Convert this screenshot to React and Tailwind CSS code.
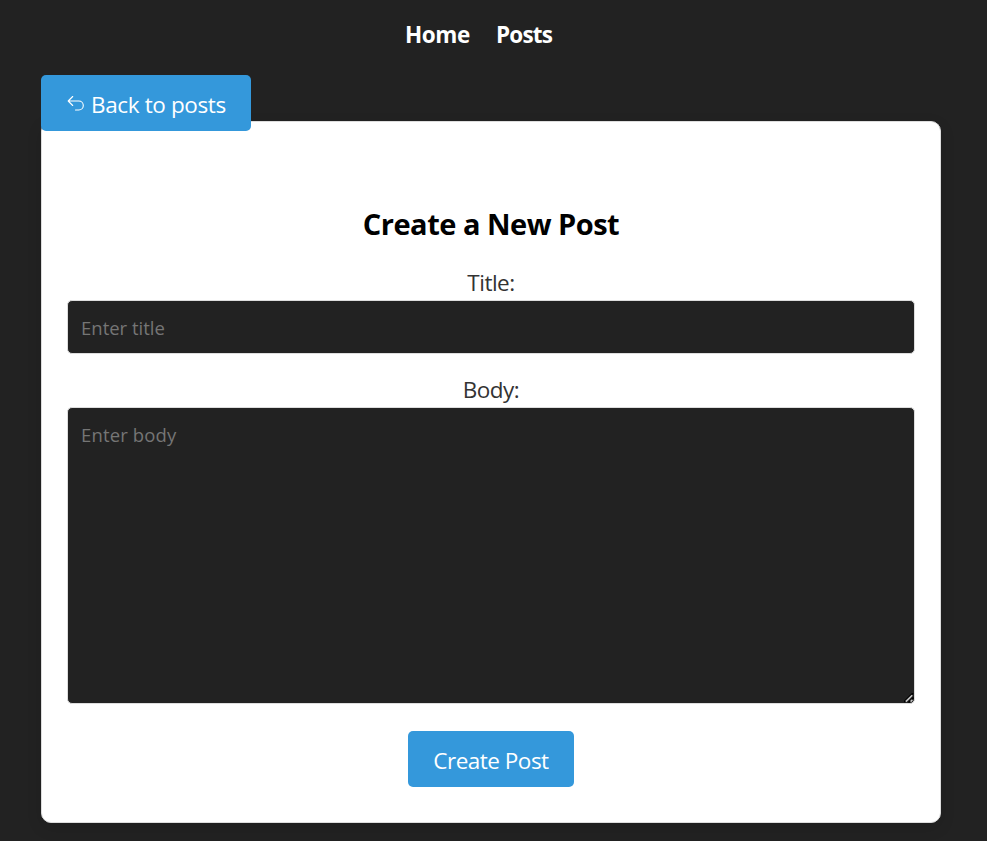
import React from "react";

export default function App() {
  return (
    <div className="h-[841px] w-[987px] overflow-hidden bg-[#222222] pl-[41px] font-['Open_Sans','Noto_Sans',sans-serif]">
      <nav className="flex h-[75px] gap-[26px] pt-[18px] pl-[364px] text-[22.5px] leading-[34px] font-bold text-white">
        <a className="w-[65px] tracking-[-0.4px] whitespace-nowrap">Home</a>
        <a className="tracking-[-0.8px] whitespace-nowrap">Posts</a>
      </nav>
      <button className="relative z-10 flex h-[56px] w-[210px] items-center rounded-[5px] bg-[#3498db] pt-[3px] pl-[26px] text-[22.5px] whitespace-nowrap text-white">
        <svg className="mb-[2px] h-[18px] w-[18px]" viewBox="0 0 18 18" fill="none" stroke="currentColor" strokeWidth="1.1" strokeLinecap="round" strokeLinejoin="round">
          <path d="M5.7 1.5 1.2 6l4.5 4.5M1.2 6h10.6a4.5 4.5 0 0 1 0 9H8.5" />
        </svg>
        <span className="ml-[6px] tracking-[-0.37px]">Back to posts</span>
      </button>
      <main className="-mt-[10px] flex h-[702px] w-[900px] flex-col items-center rounded-[10px] border border-[#dddddd] bg-white px-[25px] shadow-[0_5px_15px_rgba(0,0,0,0.12)]">
        <h2 className="mt-[82px] h-[40px] text-[29px] leading-[40px] font-bold tracking-[-0.5px] whitespace-nowrap text-black">Create a New Post</h2>
        <label className="mt-[22px] h-[34px] text-[22.5px] leading-[34px] tracking-[-0.5px] text-[#333333]">Title:</label>
        <input placeholder="Enter title" className="h-[54px] w-full shrink-0 rounded-[5px] border border-[#dddddd] bg-[#222222] px-[13px] text-[18.5px] text-white placeholder:text-[#757575]" />
        <label className="mt-[19px] h-[34px] text-[22.5px] leading-[34px] tracking-[-0.5px] text-[#333333]">Body:</label>
        <div className="relative h-[297px] w-full shrink-0">
          <textarea placeholder="Enter body" className="block h-full w-full resize-none rounded-[5px] border border-[#dddddd] bg-[#222222] px-[13px] pt-[14px] text-[18.5px] leading-[26px] tracking-[0.15px] text-white placeholder:text-[#757575]" />
          <svg className="pointer-events-none absolute right-[1px] bottom-[1px] h-[10px] w-[10px]" viewBox="0 0 10 10" fill="none">
            <path d="M0 9 9 0M4.5 9.5 9.5 4.5" stroke="#000000" strokeWidth="1.6" />
            <path d="M1.8 8.6 8.2 2.2M6.6 8.6 8.4 6.8" stroke="#c4c4c4" strokeWidth="1.6" />
          </svg>
        </div>
        <button className="mt-[27px] h-[56px] w-[166px] rounded-[5px] bg-[#3498db] pt-[3px] text-[22.5px] tracking-[-0.5px] whitespace-nowrap text-white">Create Post</button>
      </main>
    </div>
  );
}
